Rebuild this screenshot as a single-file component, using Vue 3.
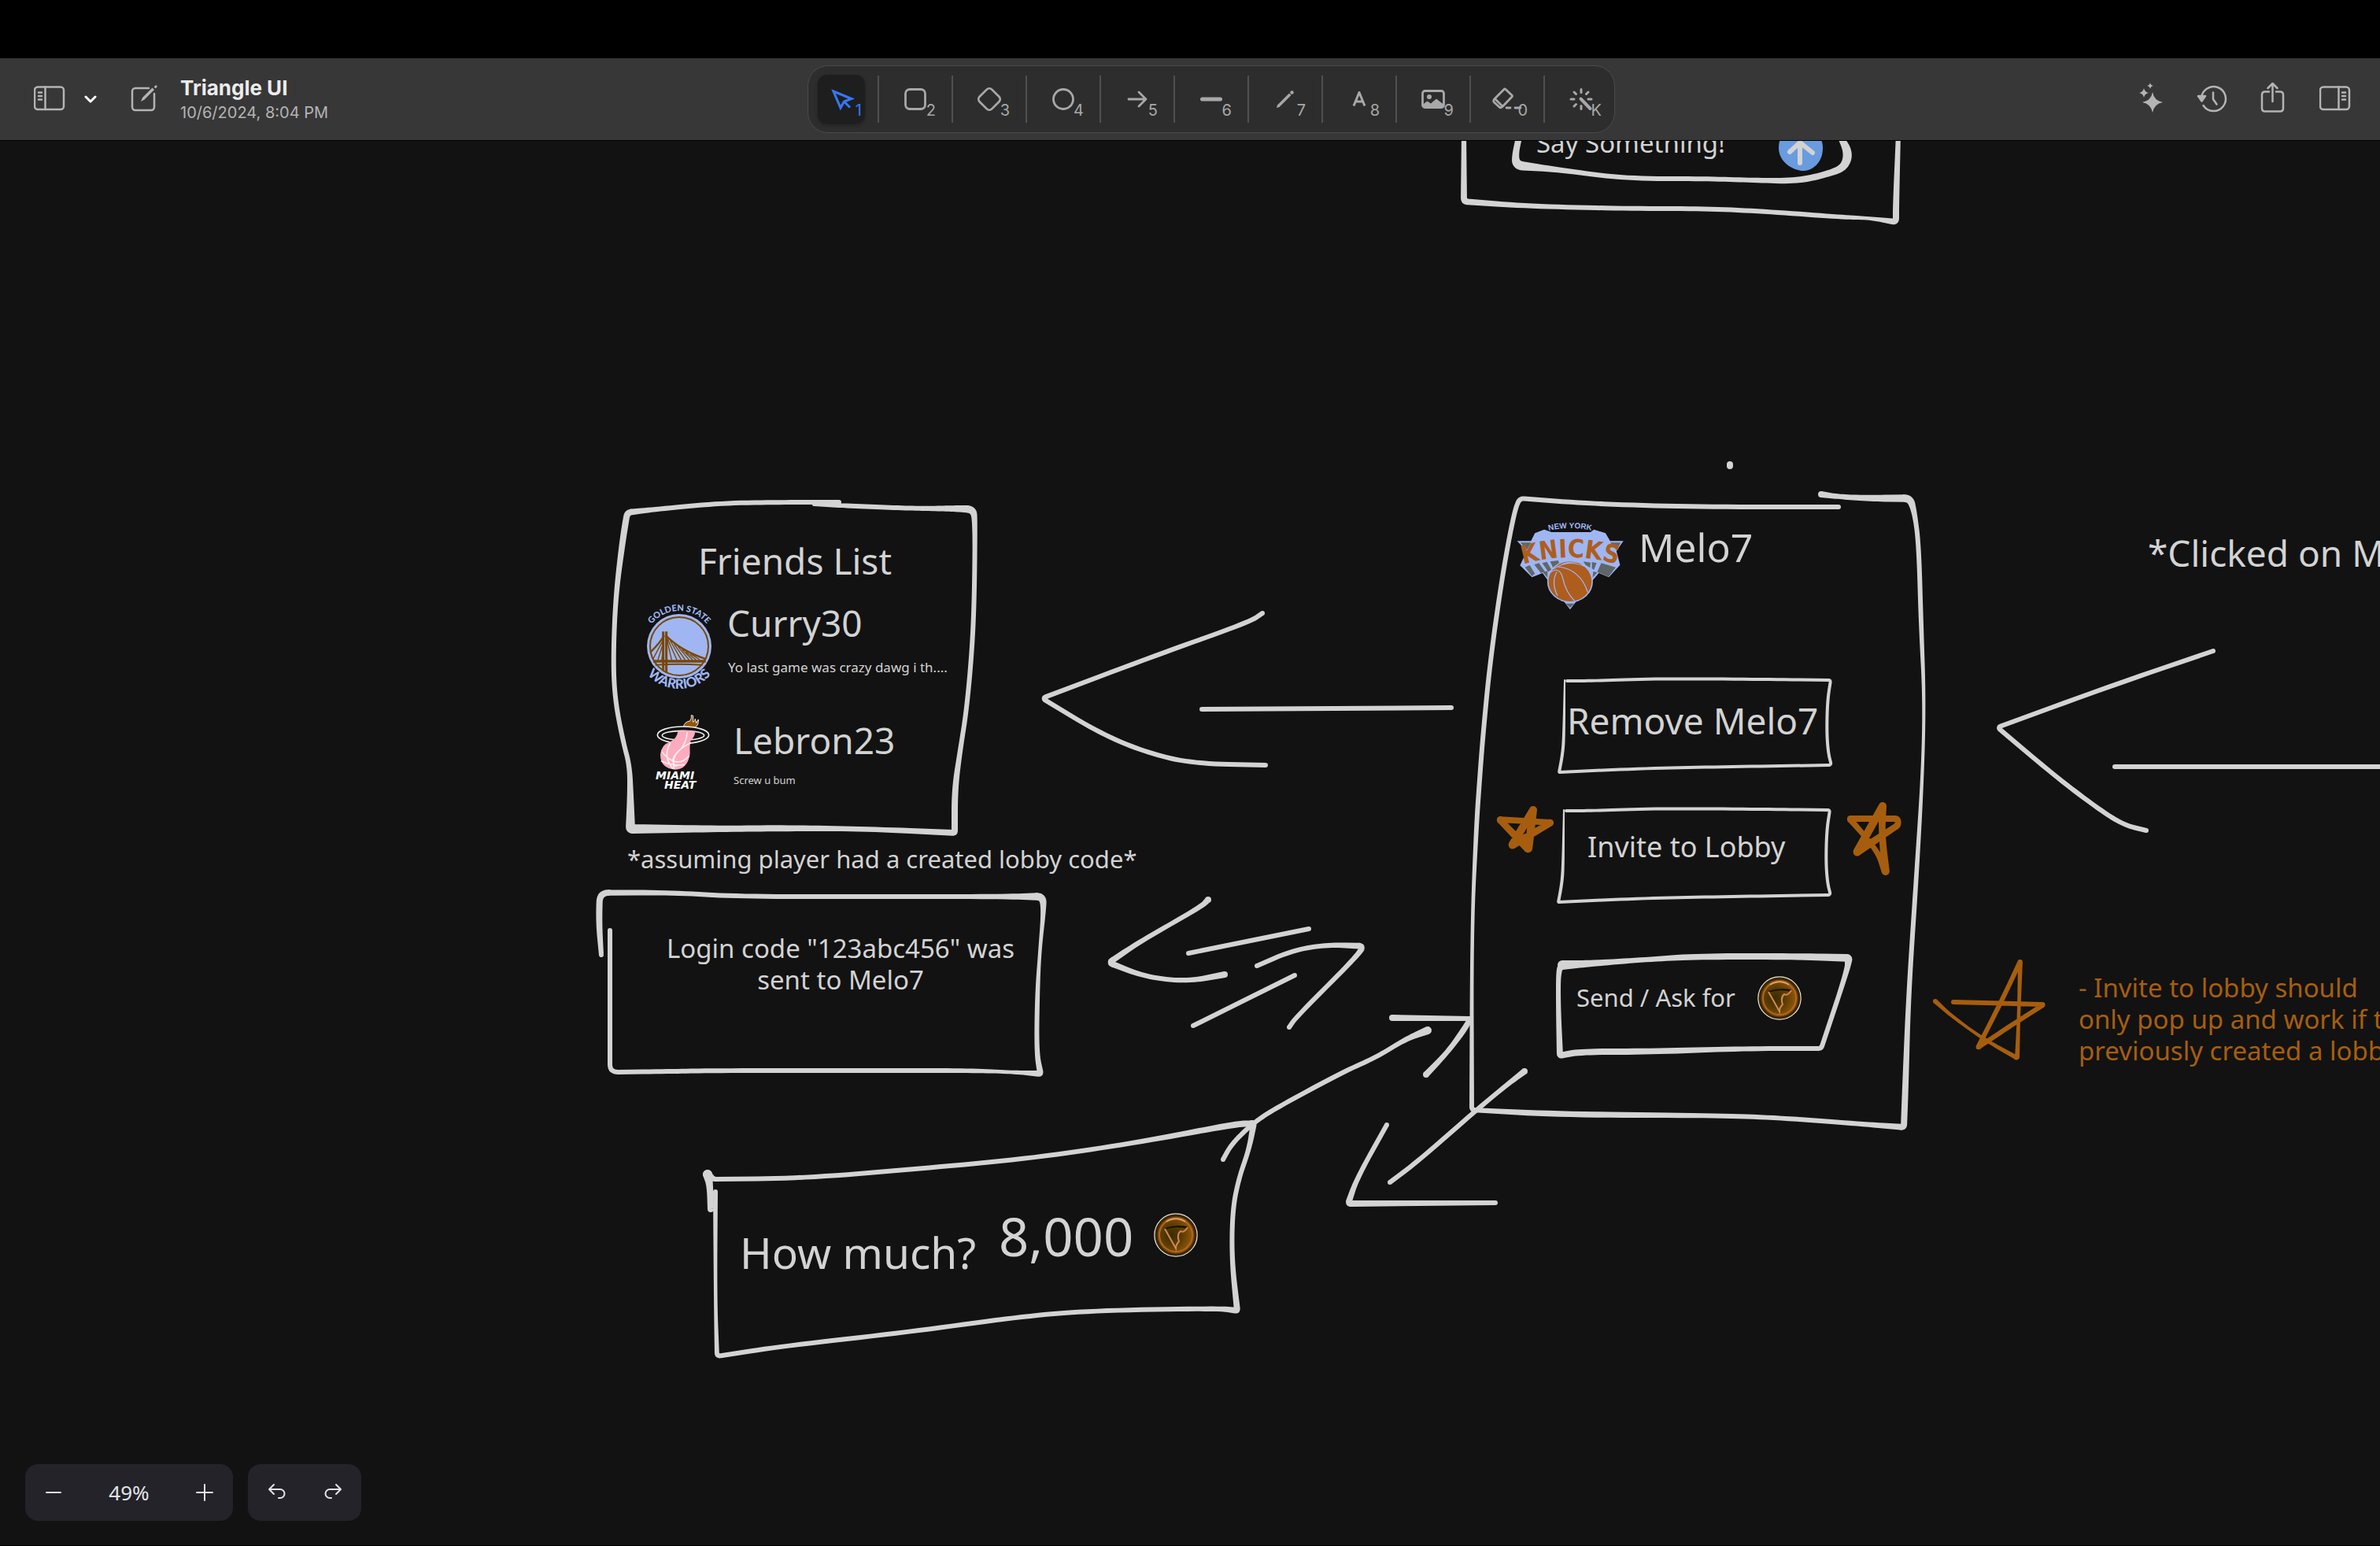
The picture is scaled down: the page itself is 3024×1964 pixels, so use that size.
<script setup>
import { ref } from 'vue'

const tools = [
  { id: 'select', key: '1' },
  { id: 'rectangle', key: '2' },
  { id: 'diamond', key: '3' },
  { id: 'ellipse', key: '4' },
  { id: 'arrow', key: '5' },
  { id: 'line', key: '6' },
  { id: 'pencil', key: '7' },
  { id: 'text', key: '8' },
  { id: 'image', key: '9' },
  { id: 'eraser', key: '0' },
  { id: 'laser', key: 'K' }
]
const active = ref('select')
const zoom = ref(49)

// Text on the board: x is the left edge, y the first baseline.
const sizes = { xs: 13, s: 17, m: 31, l: 33, xl: 36, name: 46, h2: 50, h1: 55, sum: 67 }
const labels = [
  { text: 'Say Something!', x: 1952, y: 195, size: 'l' },
  { text: 'Friends List', x: 887, y: 730, size: 'name' },
  { text: 'Curry30', x: 924, y: 809, size: 'name' },
  { text: 'Yo last game was crazy dawg i th....', x: 925, y: 855, size: 's' },
  { text: 'Lebron23', x: 932, y: 958, size: 'name' },
  { text: 'Screw u bum', x: 932, y: 996, size: 'xs' },
  { text: '*assuming player had a created lobby code*', x: 797, y: 1103, size: 'm' },
  { text: 'Login code "123abc456" was\nsent to Melo7', x: 847, y: 1218, size: 'l', center: true },
  { text: 'Melo7', x: 2082, y: 714, size: 'h2' },
  { text: 'Remove Melo7', x: 1991, y: 933, size: 'name' },
  { text: 'Invite to Lobby', x: 2017, y: 1090, size: 'xl' },
  { text: 'Send / Ask for', x: 2003, y: 1279, size: 'm' },
  { text: 'How much?', x: 940, y: 1612, size: 'h1' },
  { text: '8,000', x: 1269, y: 1596, size: 'sum' },
  { text: '*Clicked on Melo7', x: 2729, y: 720, size: 'name' },
  {
    text: '- Invite to lobby should\nonly pop up and work if the\npreviously created a lobby',
    x: 2641, y: 1268, size: 'l', accent: true
  }
]
const place = (l) => ({
  left: l.x + 'px',
  top: l.y - Math.round((l.size === 'sum' ? 40 : l.text.includes('\n') ? 20 : 30) + 0.388 * sizes[l.size]) + 'px'
})

// Freehand strokes: [x, y, half width, corner radius].
const ink = [
  [[1860, 170, 3], [1860, 256, 4, 5], [1942, 262, 3], [2065, 265, 3], [2167, 265, 3], [2249, 269, 3], [2342, 276, 3], [2375, 277, 2], [2409, 282, 4, 5], [2409, 260, 4], [2412, 170, 3]],
  [[1931, 170, 4], [1925, 197, 4], [1927, 210, 6, 8], [1983, 216, 3], [2065, 227, 3], [2167, 227, 3], [2228, 229, 3], [2285, 230, 4], [2326, 220, 4], [2344, 212, 5], [2349, 193, 6], [2336, 170, 3]],
  [[1066, 638, 3], [1000, 638, 3], [917, 639, 3], [833, 647, 3], [797, 651, 4, 6], [791, 687, 4], [782, 760, 3], [779, 843, 3], [782, 893, 3], [792, 943, 3], [800, 973, 3], [801, 1010, 4], [801, 1053, 6, 3], [917, 1053, 4], [1000, 1052, 4], [1100, 1053, 3], [1213, 1058, 4, 3], [1213, 1003, 4], [1220, 953, 3], [1228, 903, 3], [1235, 827, 3], [1238, 760, 3], [1239, 660, 3], [1236, 647, 5, 8], [1213, 646, 4], [1177, 646, 3], [1133, 645, 3], [1067, 642, 3], [1034, 641, 2]],
  [[764, 1213, 3], [761, 1173, 4], [762, 1134, 4, 12], [855, 1134, 3], [938, 1139, 3], [1096, 1139, 3], [1274, 1139, 3], [1325, 1139, 5, 8], [1326, 1157, 3], [1321, 1210, 2], [1318, 1263, 3], [1317, 1337, 3], [1322, 1364, 4, 3], [1286, 1362, 2], [1234, 1360, 3], [1135, 1360, 3], [906, 1360, 3], [859, 1361, 3], [775, 1362, 3, 10], [775, 1182, 3]],
  [[2336, 644, 3], [2156, 644, 3], [2021, 640, 3], [1931, 633, 3, 6], [1924, 650, 3], [1909, 730, 3], [1893, 843, 3], [1884, 937, 3], [1880, 990, 3], [1876, 1047, 3], [1870, 1180, 2], [1870, 1410, 3, 4], [1987, 1416, 4], [2177, 1417, 3], [2261, 1420, 3], [2366, 1428, 3], [2419, 1432, 4, 4], [2421, 1380, 4], [2425, 1263, 3], [2435, 1113, 3], [2443, 980, 2], [2445, 887, 2], [2441, 797, 3], [2438, 693, 3], [2433, 653, 3], [2427, 633, 5, 8], [2374, 633, 4], [2336, 631, 3], [2314, 628, 4]],
  [[1985, 1226, 6], [2021, 1224, 4], [2092, 1219, 3], [2156, 1215, 4], [2282, 1215, 4], [2349, 1217, 5, 3], [2347, 1233, 3], [2314, 1332, 3, 4], [2219, 1332, 3], [2092, 1336, 4], [2008, 1336, 4], [1982, 1341, 4, 3], [1980, 1280, 3], [1980, 1233, 3], [1985, 1226, 5]],
  [[899, 1492, 6], [906, 1498, 3, 4], [1018, 1497, 3], [1165, 1485, 3], [1316, 1471, 3], [1454, 1450, 3], [1569, 1428, 4], [1593, 1427, 4, 3], [1587, 1460, 3], [1574, 1497, 3], [1566, 1537, 3], [1565, 1600, 3], [1572, 1665, 4, 3], [1548, 1662, 3], [1385, 1665, 3], [1293, 1673, 3], [1156, 1692, 3], [995, 1710, 3], [911, 1723, 3, 5], [909, 1650, 2], [909, 1514, 3]],
  [[899, 1492, 6], [902, 1506, 4], [903, 1536, 4]],
  [[1535, 1143, 4], [1526, 1152, 3], [1447, 1197, 3], [1409, 1223, 4, 6], [1455, 1241, 3], [1508, 1247, 3], [1556, 1238, 4]],
  [[1510, 1211, 3], [1663, 1180, 3]],
  [[1597, 1227, 3], [1643, 1207, 3], [1688, 1200, 3], [1732, 1202, 4, 6], [1724, 1215, 3], [1647, 1292, 3], [1638, 1305, 3]],
  [[1516, 1303, 3], [1645, 1239, 3]],
  [[1769, 1293, 4], [1868, 1294, 3, 1], [1861, 1307, 4], [1839, 1337, 3], [1812, 1365, 4]],
  [[1554, 1473, 3], [1565, 1453, 3], [1594, 1425, 3], [1626, 1405, 3], [1708, 1361, 3], [1749, 1343, 3], [1786, 1320, 3], [1814, 1309, 5]],
  [[1937, 1361, 4], [1916, 1377, 3], [1876, 1410, 3], [1802, 1475, 3], [1766, 1502, 3]],
  [[1762, 1429, 3], [1724, 1497, 3], [1713, 1529, 4, 4], [1900, 1528, 3]],
  [[1604, 779, 3], [1588, 790, 3], [1470, 832, 3], [1324, 887, 3, 6], [1400, 933, 3], [1460, 957, 3], [1516, 970, 3], [1608, 972, 3]],
  [[1527, 901, 3], [1844, 899, 3]],
  [[2812, 827, 3], [2680, 872, 3], [2538, 924, 3, 5], [2610, 985, 3], [2664, 1026, 3], [2698, 1048, 3], [2727, 1055, 3]],
  [[2687, 974, 3], [3060, 974, 3]],
  [[2198, 590, 4], [2198, 592, 4]]
]
const button = [[1988, 864, 1], [1987, 940, 2], [1985, 960, 2], [1981, 981, 2, 1], [2092, 976, 2], [2198, 974, 2], [2327, 972, 2, 4], [2323, 957, 2], [2321, 930, 2], [2322, 890, 2], [2326, 864, 2, 3], [2244, 863, 2], [2109, 862, 2], [2021, 865, 2], [1991, 865, 2]]
const stars = [
  [[1948, 1029, 5], [1921, 1074, 5, 2], [1971, 1045, 4, 2], [1905, 1041, 4, 2], [1942, 1079, 5, 2], [1948, 1029, 5]],
  [[2392, 1024, 5], [2359, 1083, 5, 2], [2412, 1048, 4, 4], [2411, 1040, 4, 4], [2350, 1040, 4, 2], [2385, 1080, 3], [2396, 1108, 5, 2], [2391, 1060, 4], [2392, 1024, 5]],
  [[2459, 1272, 3], [2480, 1291, 2], [2520, 1320, 2], [2563, 1344, 3, 2], [2565, 1290, 2], [2567, 1221, 3, 2], [2545, 1268, 3], [2513, 1331, 3, 2], [2550, 1306, 3], [2597, 1276, 3, 3], [2482, 1273, 3]]
]

function stroke(points) {
  const s = [points[0].slice(0, 3)]
  const dots = [points[0], points[points.length - 1]]
  for (let i = 1; i < points.length - 1; i++) {
    const [a, p, b] = [points[i - 1], points[i], points[i + 1]]
    const toward = (q) => {
      const len = Math.hypot(q[0] - p[0], q[1] - p[1])
      const t = Math.min(0.5, (p[3] ?? 1e6) / len)
      return [0, 1, 2].map((k) => p[k] + (q[k] - p[k]) * t)
    }
    const [from, to] = [toward(a), toward(b)]
    for (let n = 0; n <= 10; n++) {
      const t = n / 10
      const at = [0, 1, 2].map((k) => (1 - t) ** 2 * from[k] + 2 * t * (1 - t) * p[k] + t * t * to[k])
      const last = s[s.length - 1]
      if (Math.hypot(at[0] - last[0], at[1] - last[1]) < 0.05) continue
      s.push(at)
      if (p[3]) dots.push(at)
    }
  }
  s.push(points[points.length - 1].slice(0, 3))
  const f = (n) => n.toFixed(2)
  const one = []
  const two = []
  s.forEach(([x, y, w], i) => {
    const [a, b] = [s[Math.max(0, i - 1)], s[Math.min(s.length - 1, i + 1)]]
    const len = Math.hypot(b[0] - a[0], b[1] - a[1]) || 1
    const [nx, ny] = [((b[1] - a[1]) / len) * w, ((a[0] - b[0]) / len) * w]
    one.push(`${f(x + nx)} ${f(y + ny)}`)
    two.unshift(`${f(x - nx)} ${f(y - ny)}`)
  })
  const caps = dots.map(([x, y, w]) => `M${f(x - w)} ${f(y)}a${w} ${w} 0 1 1 ${f(2 * w)} 0a${w} ${w} 0 1 1 ${f(-2 * w)} 0z`)
  return `M${one.join('L')}L${two.join('L')}z${caps.join('')}`
}
</script>

<template>
  <div class="app">
    <div class="notch"></div>
    <header class="bar">
      <div class="left">
        <button class="icon" aria-label="Toggle sidebar">
          <svg width="40" height="34" viewBox="0 0 40 34" class="line2"><rect x="1" y="1.500" width="37" height="28.500" rx="4" /><path d="M14.500 1.500v28.500M6 8.500h4M6 13h4M6 17.500h4" /></svg>
        </button>
        <button class="icon chevron" aria-label="Files">
          <svg width="16" height="12" viewBox="0 0 16 12"><path d="M2 3l6 6 6-6" fill="none" stroke="#fff" stroke-width="3" stroke-linecap="round" stroke-linejoin="round" /></svg>
        </button>
        <button class="icon compose" aria-label="New drawing">
          <svg width="36" height="36" viewBox="0 0 36 36" class="line2"><path d="M23 6H6a4 4 0 0 0-4 4v20a4 4 0 0 0 4 4h20a4 4 0 0 0 4-4V13" /><path d="M13 23l2-5L27.500 5.500l2.500 2.500L17.500 20.500z" fill="#b4b4b4" stroke="none" /><path d="M31.500 4.500l.6-.6" stroke-width="3" /></svg>
        </button>
        <div class="title">
          <h1>Triangle UI</h1>
          <time>10/6/2024, 8:04 PM</time>
        </div>
      </div>

      <nav class="tools" aria-label="Tools">
        <template v-for="(t, i) in tools" :key="t.id">
          <span v-if="i" class="rule"></span>
          <button class="tool" :class="{ on: active === t.id }" :aria-label="t.id" @click="active = t.id">
            <svg width="32" height="32" viewBox="0 0 32 32">
              <path v-if="t.id === 'select'" d="M6 6l23 9.500-9.500 3.500L15 27zM20 19.500l7 7" stroke-width="3" stroke-linecap="butt" stroke-linejoin="miter" />
              <rect v-else-if="t.id === 'rectangle'" x="3.500" y="3.500" width="25" height="25" rx="5.500" />
              <rect v-else-if="t.id === 'diamond'" x="5" y="5" width="22" height="22" rx="4.500" transform="rotate(45 16 16)" />
              <circle v-else-if="t.id === 'ellipse'" cx="16" cy="16" r="12.500" />
              <path v-else-if="t.id === 'arrow'" d="M5 16h22M18 7l9 9-9 9" />
              <path v-else-if="t.id === 'line'" d="M4.500 16h23" stroke-width="5" />
              <g v-else-if="t.id === 'pencil'" class="solid"><path d="M5 27l1-3.500L21 8.500l2.500 2.500L8.500 26z" /><circle cx="24.500" cy="7.500" r="2.200" /></g>
              <path v-else-if="t.id === 'text'" d="M9 24.500L16 7.500l7 17M11.500 19h9" stroke-width="3" stroke-linecap="butt" />
              <g v-else-if="t.id === 'image'"><rect x="2.500" y="5.500" width="27" height="21" rx="3" /><g class="solid"><circle cx="11" cy="13" r="3" /><path d="M3 22.500l5.500-4 4.500 3 7-6 9 7v4H3z" /></g></g>
              <path v-else-if="t.id === 'eraser'" d="M.5 15L12 3.500q1-1 2 0l8 7.500q1 1 0 2L9.500 26q-2 1.500-3.500 0L-1 19.500q-1-2 1.500-4.500zM1.500 16.500l8 8M15 27h5M26 27h7" />
              <g v-else><path d="M16 3.500v4M16 24.500v4M3 16h4M25 16h4M7 7l2.500 2.500M25 7l-2.500 2.500M7 25l2.500-2.500" stroke-width="3" /><path d="M15.500 15.500L27.500 28" stroke-width="4" /></g>
            </svg>
            <span class="key">{{ t.key }}</span>
          </button>
        </template>
      </nav>

      <div class="right">
        <button class="icon" aria-label="Generate">
          <svg width="40" height="44" viewBox="0 0 40 44" fill="#b4b4b4"><path d="M22 13q2 11 13 13-11 2-13 13-2-11-13-13 11-2 13-13zM11 8q1 5 6 6-5 1-6 6-1-5-6-6 5-1 6-6zM19 1q.6 3.400 4 4-3.400.6-4 4-.6-3.400-4-4 3.400-.6 4-4z" /></svg>
        </button>
        <button class="icon" aria-label="History">
          <svg width="40" height="44" viewBox="0 0 40 44" class="line2"><path d="M6 21a15.500 15.500 0 1 1 2.500 9M21 13.500v8.500l4.500 6.500" /><path d="M2 18h9L6.500 24.500z" fill="#b4b4b4" /></svg>
        </button>
        <button class="icon" aria-label="Share">
          <svg width="40" height="44" viewBox="0 0 40 44" class="line2"><path d="M14 12.500H9q-4 0-4 4v17q0 4 4 4h19q4 0 4-4v-17q0-4-4-4h-5M18.500 25V2.500M12.500 8l6-6 6 6" /></svg>
        </button>
        <button class="icon" aria-label="Toggle library">
          <svg width="40" height="44" viewBox="0 0 40 44" class="line2"><rect x="1" y="6.500" width="37" height="28.500" rx="4" /><path d="M24.500 6.500v28.500M29 13.500h4M29 18h4M29 22.500h4" /></svg>
        </button>
      </div>
    </header>

    <main class="board">
      <div class="world">
        <svg class="ink" aria-hidden="true">
          <defs>
            <radialGradient id="coin" cx="0.4" cy="0.5" r="0.7">
              <stop offset="0" stop-color="#3a2a02" /><stop offset="0.35" stop-color="#5a3c04" /><stop offset="0.65" stop-color="#8a5208" /><stop offset="1" stop-color="#4e3403" />
            </radialGradient>
            <path id="arcTop" d="M818 821a45 45 0 0 1 90 0" />
            <path id="arcBottom" d="M809 821a54 54 0 0 0 108 0" />
            <path id="arcKnicks" d="M1932 718q63 -20 126 0" />
            <path id="arcNew" d="M1968 674q27 -6 54 0" />
            <g id="token">
              <circle r="27" fill="url(#coin)" stroke="#ece6dc" stroke-width="1.500" />
              <circle r="25" fill="none" stroke="#3a2702" stroke-width="3" />
              <circle r="21" fill="none" stroke="#b5651d" stroke-width="2" />
              <path d="M-12 -17A21 21 0 0 1 12 -17" fill="none" stroke="#dc9c6c" stroke-width="2" />
              <path d="M-14 -9Q0 -14 15 -11L14 -8Q0 -12 -14 -7z" fill="#1c1402" />
              <path d="M-14 -8L0 17Q0 12 4 8 1 -1 6 -5 10 -2 15 -10" fill="none" stroke="#cf8a52" stroke-width="2" />
            </g>
          </defs>

          <path d="M2260 188c0-18 12-28 28-28s28 12 28 28c0 17-11 28-24 29-15 0-32-12-32-29z" fill="#699bdf" />
          <path d="M2287 207V181M2274 193l13-12 16 13" class="up" />

          <path v-for="(s, i) in ink" :key="i" :d="stroke(s)" />
          <path :d="stroke(button)" />
          <path :d="stroke(button)" transform="translate(-1 165)" />
          <path v-for="(s, i) in stars" :key="'star' + i" :d="stroke(s)" class="accent" />

          <!-- Golden State -->
          <g>
            <circle cx="863" cy="821" r="41" fill="#9fb6f2" />
            <circle cx="863" cy="821" r="37" fill="none" stroke="#784600" stroke-width="2" />
            <g transform="translate(750 610) scale(.3333)" fill="none" stroke="#784600">
              <path d="M278 577v150M290 577v158" stroke-width="9" />
              <path d="M230 655Q265 620 282 592M288 592Q345 650 442 682" stroke-width="7" />
              <path d="M280 605L240 680M280 615l-22 70M280 630l-8 58M292 605l18 80M295 605l35 80M305 612l42 73M320 625l42 60M335 635l42 50M350 645l40 40M365 655l38 30M382 662l35 22" stroke-width="4" />
              <path d="M240 690H440" stroke-width="10" /><path d="M248 704q90-6 180 0" stroke-width="6" />
            </g>
            <text class="warriors" font-size="11"><textPath href="#arcTop" startOffset="50%" text-anchor="middle">GOLDEN STATE</textPath></text>
            <text class="warriors" font-size="17"><textPath href="#arcBottom" startOffset="50%" text-anchor="middle">WARRIORS</textPath></text>
          </g>

          <!-- Miami -->
          <g transform="translate(750 610) scale(.3333)">
            <path d="M355 940q5-20 25-22 8-12 5-22l7 2v24q8-4 8-12l4 16 8-14q2 22-12 30z" fill="#955505" stroke="#eee" stroke-width="3" />
            <ellipse cx="354" cy="971" rx="98" ry="32" fill="#121212" stroke="#eee" stroke-width="5" />
            <ellipse cx="354" cy="973" rx="80" ry="18" fill="none" stroke="#eee" stroke-width="5" />
            <path d="M334 958q35-6 66 0-2 22-18 36-4 22-2 48-8 60-56 61-56-4-57-56 2-38 38-50 26-14 29-39z" fill="#ffabbf" />
            <path d="M272 1035q60 70 105 15M305 1002q-30 50 10 98M370 960q-5 50-35 75-25 22-15 66M385 1000q-60 30-70 65 0 20 15 26M270 1070q40 20 90 15" fill="none" stroke="#f4f0f0" stroke-width="5" />
          </g>
          <text class="miami" x="833" y="990">MIAMI</text>
          <text class="miami" x="844" y="1002">HEAT</text>

          <!-- New York -->
          <g transform="translate(1840 570) scale(.4209 .3333)" stroke-linejoin="round">
            <path d="M208 352h42l12-30 28-14 22 10h118l10-10 35 14 14 30h40l-21 38 11 53-34 47-30-16-18 26-69 113-68-113-15-26-32 16-36-45 20-55z" fill="#9fb6f2" />
            <path d="M218 358h32l-13 28zM489 358h32l-13 28zM232 452l14-8 16 32-9 10zM260 442l14-6 18 32-12 6zM284 436l14-5 14 30-10 8zM308 430l24-4 4 12-18 20zM408 430l22 4-2 20-14-12zM434 432l14 4-8 26-6-6zM462 436l44 16-22 36-34-18zM286 470l14-4v26zM438 468l12 4-14 20zM355 590h26l-13 16z" fill="#5f6668" />
            <ellipse cx="368" cy="506" rx="67" ry="78" fill="#ae5d1d" stroke="#9fb6f2" stroke-width="4" />
            <path d="M306 474q30-30 40 20 10 56 36 86M330 560q-20-50-2-90M330 449q70 10 92 100M318 459q50-45 110 0M340 444q20-16 60-10" fill="none" stroke="#9fb6f2" stroke-width="3" />
          </g>
          <text class="knicks"><textPath href="#arcKnicks" startOffset="50%" text-anchor="middle">KNICKS</textPath></text>
          <text class="newyork"><textPath href="#arcNew" startOffset="50%" text-anchor="middle">NEW YORK</textPath></text>

          <use href="#token" x="2261" y="1268" />
          <use href="#token" x="1494" y="1569" />
        </svg>

        <p v-for="l in labels" :key="l.text" class="label" :class="[l.size, { center: l.center, block: l.text.includes('\n'), orange: l.accent }]" :style="place(l)">{{ l.text }}</p>
      </div>

      <div class="controls">
        <div class="group">
          <button aria-label="Zoom out" @click="zoom--"><svg width="24" height="24" viewBox="0 0 24 24"><path d="M3 12h18" /></svg></button>
          <output class="percent">{{ zoom }}%</output>
          <button aria-label="Zoom in" @click="zoom++"><svg width="24" height="24" viewBox="0 0 24 24"><path d="M2 12h20M12 2v20" /></svg></button>
        </div>
        <div class="group">
          <button aria-label="Undo"><svg width="24" height="24" viewBox="0 0 24 24"><path d="M9 2L3 8l6 6M3 8h14a5.500 5.500 0 0 1 0 11h-2" /></svg></button>
          <button aria-label="Redo"><svg width="24" height="24" viewBox="0 0 24 24"><path d="M16 2l6 6-6 6M22 8H8a5.500 5.500 0 0 0 0 11h2" /></svg></button>
        </div>
      </div>
    </main>
  </div>
</template>

<style>
body { background: #121212; }
</style>

<style scoped>
.app {
  display: flex;
  flex-direction: column;
  height: 100vh;
  overflow: hidden;
  background: #121212;
  font-family: "Inter", sans-serif;
}
button {
  margin: 0;
  padding: 0;
  border: 0;
  background: none;
  color: inherit;
  font: inherit;
  display: flex;
  align-items: center;
  justify-content: center;
}
svg { display: block; flex: none; }
.notch { flex: none; height: 74px; background: #000; }
.bar {
  flex: none;
  display: grid;
  grid-template-columns: minmax(0, 1026fr) auto minmax(0, 972fr);
  align-items: center;
  height: 104px;
  background: #373737;
  border-bottom: 1px solid #000;
  color: #b4b4b4;
}
.left { display: flex; align-items: center; padding-left: 43px; }
.right { display: flex; align-items: center; justify-content: flex-end; gap: 38px; padding-right: 37px; }
.line2 { fill: none; stroke: #b4b4b4; stroke-width: 2.5; stroke-linecap: round; stroke-linejoin: round; }
.chevron { margin-left: 24px; }
.compose { margin-left: 43px; margin-bottom: 4px; }
.title { margin-left: 27px; padding-top: 2px; }
.title h1 { margin: 0; font-size: 26px; line-height: 32px; font-weight: 700; color: #ececec; }
.title time { display: block; font-size: 20px; line-height: 30px; }
.tools {
  box-sizing: border-box;
  display: flex;
  align-items: center;
  gap: 16px;
  height: 86px;
  padding: 0 12px;
  border: 1px solid #4a4a4a;
  border-radius: 26px;
  background: #2d2d2d;
  color: #a8a8a8;
}
.rule { width: 2px; height: 60px; background: #505050; }
.tool { position: relative; width: 60px; height: 62px; border-radius: 12px; }
.tool svg { fill: none; stroke: currentColor; stroke-width: 2.8; stroke-linecap: round; stroke-linejoin: round; overflow: visible; }
.tool .solid { fill: currentColor; stroke: none; }
.tool.on { background: #1e1e1e; color: #3478f6; box-shadow: 0 2px 4px rgba(0, 0, 0, 0.3); }
.key { position: absolute; right: 4px; bottom: 4px; font-size: 20px; line-height: 26px; }

.board { position: relative; flex: 1; overflow: hidden; border-bottom: 1px solid #000; color: #d3d3d3; }
.world { position: absolute; inset: -179px 0 0 0; }
.ink { width: 100%; height: 100%; overflow: visible; fill: #d3d3d3; }
.ink .accent { fill: #a65e0e; }
.ink .up { fill: none; stroke: #d3d3d3; stroke-width: 6; stroke-linecap: round; stroke-linejoin: round; }
.warriors { font-family: "Lato", sans-serif; font-weight: 900; fill: #9fb6f2; }
.miami { font: italic bold 14px "DejaVu Sans", sans-serif; fill: #fff; }
.knicks { font: bold 32px "DejaVu Sans Condensed", "Liberation Sans", sans-serif; fill: #ae5d1d; }
.newyork { font: bold 10px "Liberation Sans", sans-serif; fill: #9fb6f2; }

.label { position: absolute; margin: 0; white-space: pre; line-height: 60px; font-family: "Noto Sans", sans-serif; }
.center { text-align: center; }
.block { line-height: 40px; }
.orange { color: #a65e0e; }
.xs { font-size: 13px; }
.s { font-size: 17px; }
.m { font-size: 31px; }
.l { font-size: 33px; }
.xl { font-size: 36px; }
.name { font-size: 46px; }
.h2 { font-size: 50px; }
.h1 { font-size: 55px; }
.sum { font-size: 67px; line-height: 80px; }

.controls { position: absolute; left: 32px; bottom: 31px; display: flex; gap: 19px; }
.group { display: flex; align-items: center; height: 72px; border-radius: 16px; background: #232329; color: #e3e3e8; }
.group button { width: 72px; height: 72px; }
.group svg { fill: none; stroke: #e3e3e8; stroke-width: 2; stroke-linecap: round; stroke-linejoin: round; }
.percent { width: 120px; text-align: center; font: 26px/72px "Noto Sans", sans-serif; }
</style>
